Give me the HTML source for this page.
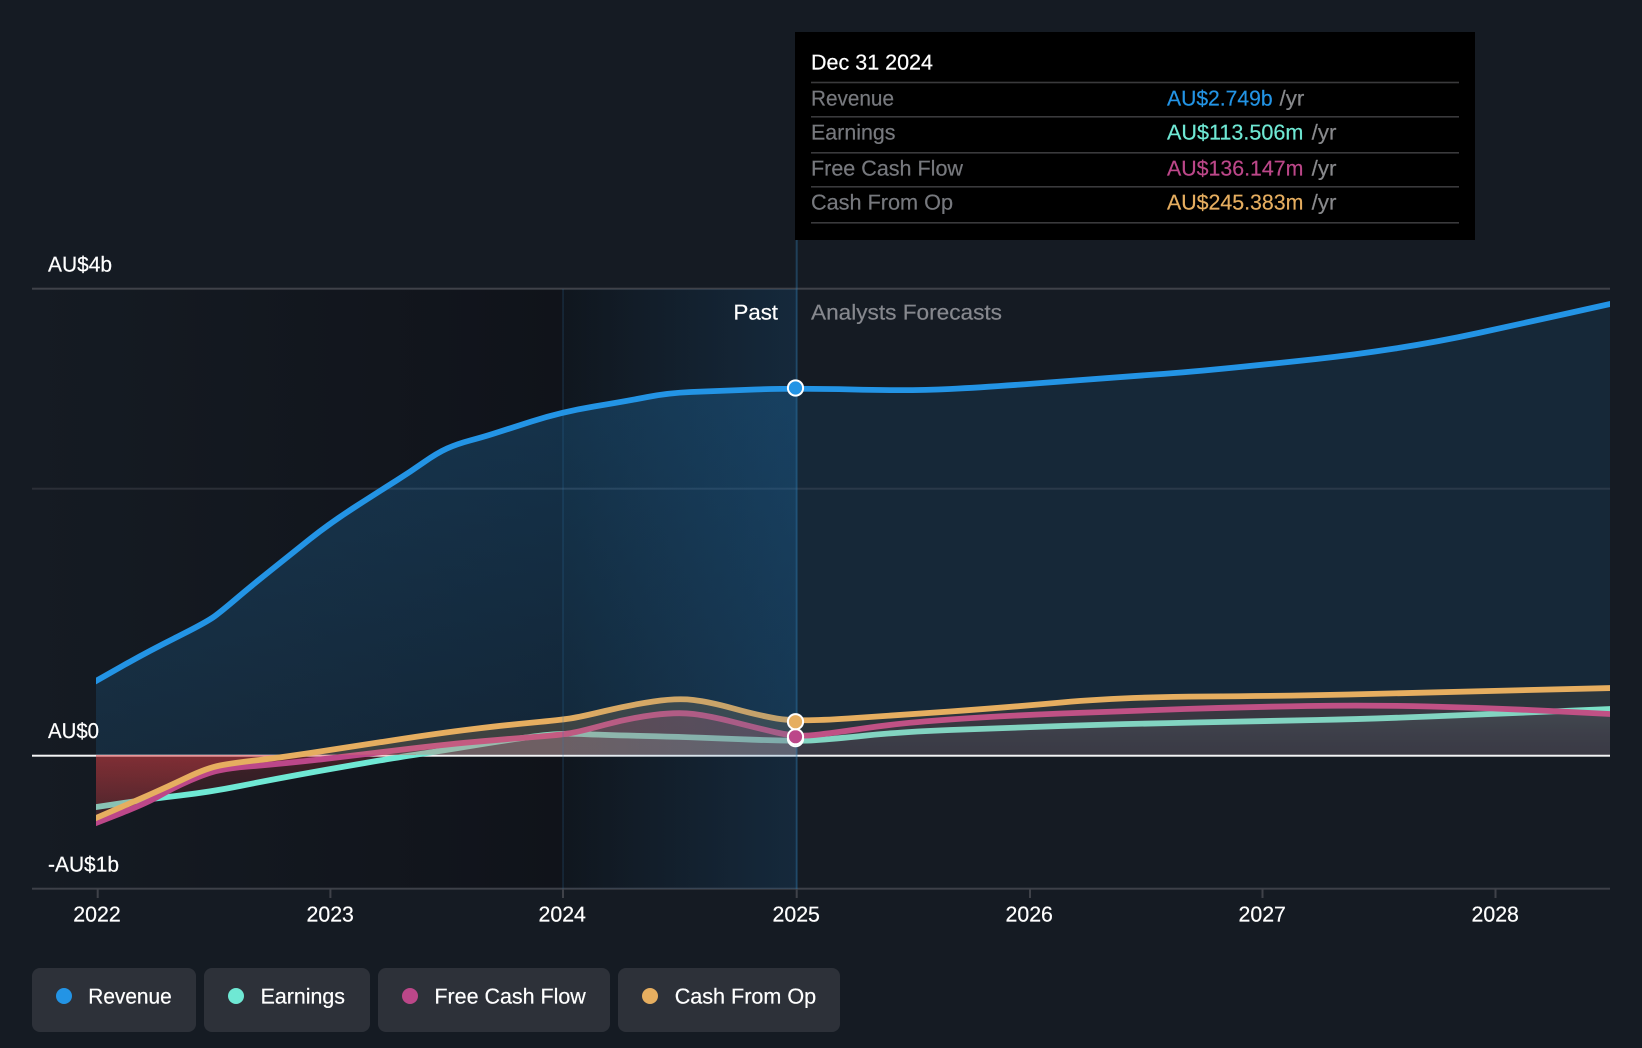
<!DOCTYPE html>
<html lang="en">
<head>
<meta charset="utf-8">
<title>Revenue and earnings chart</title>
<style>
html,body{margin:0;padding:0;background:#151b23;width:1642px;height:1048px;overflow:hidden}
svg{display:block;position:absolute;left:0;top:0}
text{font-family:"Liberation Sans",sans-serif;font-size:21.5px;fill:#fff;stroke:#fff;stroke-width:.2px;text-rendering:geometricPrecision}
.g{fill:#77797e;stroke:#77797e}
.y{fill:#88898c;stroke:#88898c}
.a{fill:#86888e;stroke:#86888e}
.b{fill:#2394e5;stroke:#2394e5}
.t{fill:#6fe8d4;stroke:#6fe8d4}
.p{fill:#bc4789;stroke:#bc4789}
.o{fill:#e6ae60;stroke:#e6ae60}
</style>
</head>
<body>
<svg width="1642" height="1048" viewBox="0 0 1642 1048" xmlns="http://www.w3.org/2000/svg">
<defs>
<linearGradient id="dark" gradientUnits="userSpaceOnUse" x1="32" y1="0" x2="563" y2="0"><stop offset="0" stop-color="#151b23"/><stop offset="1" stop-color="#10131a"/></linearGradient>
<linearGradient id="base" gradientUnits="userSpaceOnUse" x1="563" y1="0" x2="797" y2="0"><stop offset="0" stop-color="#10141a"/><stop offset="1" stop-color="#151b23"/></linearGradient>
<linearGradient id="over" gradientUnits="userSpaceOnUse" x1="563" y1="0" x2="797" y2="0"><stop offset="0" stop-color="rgb(20,100,165)" stop-opacity=".03"/><stop offset="1" stop-color="rgb(20,100,165)" stop-opacity=".19"/></linearGradient>
<linearGradient id="revP" gradientUnits="userSpaceOnUse" x1="0" y1="390" x2="0" y2="755"><stop offset="0" stop-color="rgb(36,150,230)" stop-opacity=".24"/><stop offset="1" stop-color="rgb(36,150,230)" stop-opacity=".14"/></linearGradient>
<linearGradient id="red" gradientUnits="userSpaceOnUse" x1="0" y1="755" x2="0" y2="830"><stop offset="0" stop-color="rgb(225,65,70)" stop-opacity=".22"/><stop offset="1" stop-color="rgb(225,65,70)" stop-opacity=".07"/></linearGradient>
<linearGradient id="tealF" gradientUnits="userSpaceOnUse" x1="0" y1="705" x2="0" y2="755"><stop offset="0" stop-color="rgb(120,235,215)" stop-opacity=".12"/><stop offset="1" stop-color="rgb(120,170,200)" stop-opacity=".02"/></linearGradient>
<clipPath id="all"><rect x="96" y="200" width="1514" height="700"/></clipPath>
<clipPath id="posP"><rect x="96" y="200" width="700.5" height="554.7"/></clipPath>
<clipPath id="posF"><rect x="796.5" y="200" width="813.5" height="554.7"/></clipPath>
<clipPath id="neg"><rect x="96" y="754.5" width="320" height="140"/></clipPath>

<path id="Ra" d="M96,681 L121.5,666.5 Q147,652 177,637 Q207,622 215,616 Q223,610 236.5,598.5 Q250,587 270,571 Q290,555 310,539 Q330,523 356.5,506 Q383,489 396.5,480.5 Q410,472 423.5,462.5 Q437,453 447,448.5 Q457,444 470,440.5 Q483,437 492.5,434 Q502,431 531.5,421.5 Q561,412 594,406.5 Q627,401 647.5,397 Q668,393 691,392 Q714,391 755,389.5 Q796,388 853,389.5 Q910,391 950,389 Q990,387 1055,382 Q1120,377 1155,374.5 Q1190,372 1235,367.5 Q1280,363 1316.5,359 Q1353,355 1395,348.5 Q1437,342 1478.5,333 Q1520,324 1565,314 L1610,304 V755 H96 Z"/>
<path id="Ta" d="M96,807 L123,803 Q150,799 180,795.5 Q210,792 240,786 Q270,780 300,774.5 Q330,769 365,763 Q400,757 420,754 Q440,751 473.5,745.5 Q507,740 533.5,736.5 Q560,733 581.5,734 Q603,735 645,736 Q687,737 741.5,739.25 Q796,741.5 814.5,740.25 Q833,739 866.5,735.5 Q900,732 950,730 Q1000,728 1061.5,726 Q1123,724 1194.5,722.5 Q1266,721 1317,720 Q1368,719 1429.5,716.5 Q1491,714 1550.5,711.5 L1610,709 V755 H96 Z"/>
<path id="Fa" d="M96,823 L121.5,813 Q147,803 160,795.5 Q173,788 190,780.5 Q207,773 218.5,770.5 Q230,768 248.5,766.5 Q267,765 287,763 Q307,761 328.5,758.5 Q350,756 395,750.5 Q440,745 473.5,742 Q507,739 533.5,737 Q560,735 570,733.25 Q580,731.5 605,724.75 Q630,718 653.5,715 Q677,712 693.5,714 Q710,716 733.5,722 Q757,728 776.5,732.5 Q796,737 814.5,735 Q833,733 866.5,728 Q900,723 950,719.5 Q1000,716 1061.5,713.5 Q1123,711 1184.5,709 Q1246,707 1307,706 Q1368,705 1429.5,706.5 Q1491,708 1550.5,711 L1610,714 V755 H96 Z"/>
<path id="Oa" d="M96,818 L114.5,810 Q133,802 150,794.5 Q167,787 187,777.5 Q207,768 220,765.5 Q233,763 255,760.5 Q277,758 313.5,752.5 Q350,747 395,740 Q440,733 473.5,729 Q507,725 533.5,722.5 Q560,720 570,718.5 Q580,717 605,711 Q630,705 653.5,701.5 Q677,698 693.5,700 Q710,702 733.5,708.5 Q757,715 776.5,718.5 Q796,722 848,718.5 Q900,715 950,711.5 Q1000,708 1061.5,702.5 Q1123,697 1205,696.5 Q1287,696 1348.5,694.5 Q1410,693 1510,690.5 L1610,688 V755 H96 Z"/>
</defs>

<rect width="1642" height="1048" fill="#151b23"/>

<!-- background bands -->
<rect x="32" y="289" width="531" height="600" fill="url(#dark)"/>
<rect x="563" y="289" width="234" height="600" fill="url(#base)"/>

<!-- grid -->
<rect x="32" y="287.7" width="1578" height="2" fill="#3f4249"/>
<rect x="32" y="487.7" width="1578" height="2" fill="#2b2f37"/>
<rect x="32" y="887.7" width="1578" height="2" fill="#3d4048"/>
<rect x="32" y="754.7" width="1578" height="2" fill="#f4f5f6"/>

<g fill="#3f4249">
<rect x="96.7" y="889" width="2" height="9"/>
<rect x="329.4" y="889" width="2" height="9"/>
<rect x="562" y="889" width="2" height="9"/>
<rect x="795.7" y="889" width="2" height="9"/>
<rect x="1029" y="889" width="2" height="9"/>
<rect x="1261.5" y="889" width="2" height="9"/>
<rect x="1494.5" y="889" width="2" height="9"/>
</g>

<!-- revenue area -->
<use href="#Ra" clip-path="url(#posP)" fill="url(#revP)"/>
<use href="#Ra" clip-path="url(#posF)" fill="rgba(36,150,230,.11)"/>

<!-- earnings -->
<use href="#Ta" clip-path="url(#posP)" fill="rgba(140,235,220,.2)"/>
<use href="#Ta" clip-path="url(#posF)" fill="url(#tealF)"/>
<use href="#Ta" clip-path="url(#neg)" fill="url(#red)"/>
<path clip-path="url(#all)" fill="none" stroke="#6fe8d4" stroke-width="5.8" stroke-linejoin="round" d="M90,808 L123,803 Q150,799 180,795.5 Q210,792 240,786 Q270,780 300,774.5 Q330,769 365,763 Q400,757 420,754 Q440,751 473.5,745.5 Q507,740 533.5,736.5 Q560,733 581.5,734 Q603,735 645,736 Q687,737 741.5,739.25 Q796,741.5 814.5,740.25 Q833,739 866.5,735.5 Q900,732 950,730 Q1000,728 1061.5,726 Q1123,724 1194.5,722.5 Q1266,721 1317,720 Q1368,719 1429.5,716.5 Q1491,714 1550.5,711.5 L1620,708.6"/>

<!-- free cash flow -->
<use href="#Fa" clip-path="url(#posP)" fill="rgba(190,70,130,.25)"/>
<use href="#Fa" clip-path="url(#posF)" fill="rgba(190,70,130,.09)"/>
<use href="#Fa" clip-path="url(#neg)" fill="url(#red)"/>
<path clip-path="url(#all)" fill="none" stroke="#bc4789" stroke-width="5.8" stroke-linejoin="round" d="M90,825.4 L121.5,813 Q147,803 160,795.5 Q173,788 190,780.5 Q207,773 218.5,770.5 Q230,768 248.5,766.5 Q267,765 287,763 Q307,761 328.5,758.5 Q350,756 395,750.5 Q440,745 473.5,742 Q507,739 533.5,737 Q560,735 570,733.25 Q580,731.5 605,724.75 Q630,718 653.5,715 Q677,712 693.5,714 Q710,716 733.5,722 Q757,728 776.5,732.5 Q796,737 814.5,735 Q833,733 866.5,728 Q900,723 950,719.5 Q1000,716 1061.5,713.5 Q1123,711 1184.5,709 Q1246,707 1307,706 Q1368,705 1429.5,706.5 Q1491,708 1550.5,711 L1620,714.5"/>

<!-- cash from op -->
<use href="#Oa" clip-path="url(#posP)" fill="rgba(231,175,98,.2)"/>
<use href="#Oa" clip-path="url(#posF)" fill="rgba(231,175,98,.1)"/>
<use href="#Oa" clip-path="url(#neg)" fill="url(#red)"/>
<path clip-path="url(#all)" fill="none" stroke="#e6ae60" stroke-width="5.8" stroke-linejoin="round" d="M90,820.6 L114.5,810 Q133,802 150,794.5 Q167,787 187,777.5 Q207,768 220,765.5 Q233,763 255,760.5 Q277,758 313.5,752.5 Q350,747 395,740 Q440,733 473.5,729 Q507,725 533.5,722.5 Q560,720 570,718.5 Q580,717 605,711 Q630,705 653.5,701.5 Q677,698 693.5,700 Q710,702 733.5,708.5 Q757,715 776.5,718.5 Q796,722 848,718.5 Q900,715 950,711.5 Q1000,708 1061.5,702.5 Q1123,697 1205,696.5 Q1287,696 1348.5,694.5 Q1410,693 1510,690.5 L1620,687.8"/>

<!-- band overlay -->
<rect x="563" y="289" width="234" height="600" fill="url(#over)"/>
<rect x="562" y="289" width="2" height="600" fill="rgba(50,125,180,.16)"/>
<rect x="795.7" y="240" width="2" height="649" fill="rgba(50,125,180,.38)"/>

<!-- revenue line -->
<path clip-path="url(#all)" fill="none" stroke="#2394e5" stroke-width="5.8" stroke-linejoin="round" d="M90,684.4 L121.5,666.5 Q147,652 177,637 Q207,622 215,616 Q223,610 236.5,598.5 Q250,587 270,571 Q290,555 310,539 Q330,523 356.5,506 Q383,489 396.5,480.5 Q410,472 423.5,462.5 Q437,453 447,448.5 Q457,444 470,440.5 Q483,437 492.5,434 Q502,431 531.5,421.5 Q561,412 594,406.5 Q627,401 647.5,397 Q668,393 691,392 Q714,391 755,389.5 Q796,388 853,389.5 Q910,391 950,389 Q990,387 1055,382 Q1120,377 1155,374.5 Q1190,372 1235,367.5 Q1280,363 1316.5,359 Q1353,355 1395,348.5 Q1437,342 1478.5,333 Q1520,324 1565,314 L1620,301.8"/>

<!-- markers -->
<g stroke="#fff" stroke-width="2">
<circle cx="795.5" cy="388" r="7.6" fill="#2394e5"/>
<circle cx="795.5" cy="738.7" r="7.6" fill="#6fe8d4"/>
<circle cx="795.5" cy="736.7" r="7.6" fill="#bc4789"/>
<circle cx="795.5" cy="721.7" r="7.6" fill="#e6ae60"/>
</g>

<!-- axis labels -->
<text x="48" y="271.3" textLength="64" lengthAdjust="spacingAndGlyphs">AU$4b</text>
<text x="48" y="738" textLength="51" lengthAdjust="spacingAndGlyphs">AU$0</text>
<text x="48" y="871.3" textLength="71" lengthAdjust="spacingAndGlyphs">-AU$1b</text>
<text x="73.3" y="921.7" textLength="47.4" lengthAdjust="spacingAndGlyphs">2022</text>
<text x="306.5" y="921.7" textLength="47.4" lengthAdjust="spacingAndGlyphs">2023</text>
<text x="538.5" y="921.7" textLength="47.4" lengthAdjust="spacingAndGlyphs">2024</text>
<text x="772.5" y="921.7" textLength="47.4" lengthAdjust="spacingAndGlyphs">2025</text>
<text x="1005.5" y="921.7" textLength="47.4" lengthAdjust="spacingAndGlyphs">2026</text>
<text x="1238.5" y="921.7" textLength="47.4" lengthAdjust="spacingAndGlyphs">2027</text>
<text x="1471.5" y="921.7" textLength="47.4" lengthAdjust="spacingAndGlyphs">2028</text>
<text x="733.5" y="319.3" textLength="44.5" lengthAdjust="spacingAndGlyphs">Past</text>
<text class="a" x="811" y="319.3" textLength="191" lengthAdjust="spacingAndGlyphs">Analysts Forecasts</text>

<!-- tooltip -->
<rect x="795" y="32" width="680" height="208" fill="#000"/>
<g fill="#3a3a3c">
<rect x="811" y="81.7" width="648" height="1.6"/>
<rect x="811" y="116" width="648" height="1.6"/>
<rect x="811" y="152" width="648" height="1.6"/>
<rect x="811" y="186" width="648" height="1.6"/>
<rect x="811" y="222" width="648" height="1.6"/>
</g>
<text x="811" y="69.3" textLength="122" lengthAdjust="spacingAndGlyphs">Dec 31 2024</text>
<text class="g" x="811" y="105.3" textLength="83" lengthAdjust="spacingAndGlyphs">Revenue</text>
<text class="g" x="811" y="139.3" textLength="84.5" lengthAdjust="spacingAndGlyphs">Earnings</text>
<text class="g" x="811" y="175.3" textLength="152" lengthAdjust="spacingAndGlyphs">Free Cash Flow</text>
<text class="g" x="811" y="209.3" textLength="142" lengthAdjust="spacingAndGlyphs">Cash From Op</text>
<text class="b" x="1167" y="105.3" textLength="105.6" lengthAdjust="spacingAndGlyphs">AU$2.749b</text>
<text class="y" x="1279.5" y="105.3" textLength="24.8" lengthAdjust="spacingAndGlyphs">/yr</text>
<text class="t" x="1167" y="139.3" textLength="136.4" lengthAdjust="spacingAndGlyphs">AU$113.506m</text>
<text class="y" x="1311.7" y="139.3" textLength="24.8" lengthAdjust="spacingAndGlyphs">/yr</text>
<text class="p" x="1167" y="175.3" textLength="136.4" lengthAdjust="spacingAndGlyphs">AU$136.147m</text>
<text class="y" x="1311.7" y="175.3" textLength="24.8" lengthAdjust="spacingAndGlyphs">/yr</text>
<text class="o" x="1167" y="209.3" textLength="136.4" lengthAdjust="spacingAndGlyphs">AU$245.383m</text>
<text class="y" x="1311.7" y="209.3" textLength="24.8" lengthAdjust="spacingAndGlyphs">/yr</text>

<!-- legend -->
<g fill="#2d3139">
<rect x="32" y="968" width="164" height="64" rx="8"/>
<rect x="204" y="968" width="166" height="64" rx="8"/>
<rect x="378" y="968" width="232" height="64" rx="8"/>
<rect x="618" y="968" width="222" height="64" rx="8"/>
</g>
<circle cx="64" cy="996" r="8" fill="#2394e5"/>
<circle cx="236" cy="996" r="8" fill="#6fe8d4"/>
<circle cx="410" cy="996" r="8" fill="#bc4789"/>
<circle cx="650" cy="996" r="8" fill="#e6ae60"/>
<text x="88.3" y="1003.3" textLength="83.4" lengthAdjust="spacingAndGlyphs">Revenue</text>
<text x="260.6" y="1003.3" textLength="84.4" lengthAdjust="spacingAndGlyphs">Earnings</text>
<text x="434.4" y="1003.3" textLength="151.4" lengthAdjust="spacingAndGlyphs">Free Cash Flow</text>
<text x="674.7" y="1003.3" textLength="141.5" lengthAdjust="spacingAndGlyphs">Cash From Op</text>
</svg>
</body>
</html>
